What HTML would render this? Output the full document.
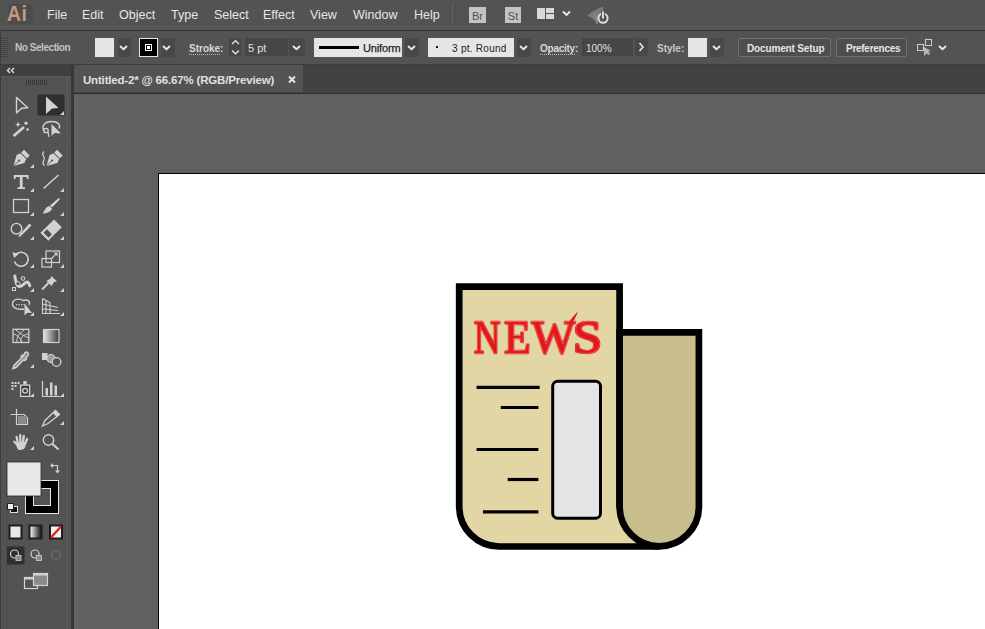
<!DOCTYPE html>
<html><head><meta charset="utf-8">
<style>
*{margin:0;padding:0;box-sizing:border-box}
html,body{width:985px;height:629px;overflow:hidden;background:#535353;font-family:"Liberation Sans",sans-serif;position:relative}
.a{position:absolute}
#menubar{left:0;top:0;width:985px;height:30px;background:#535353}
#menuline{left:0;top:30px;width:985px;height:1px;background:#383838}
#ctrl{left:0;top:31px;width:985px;height:33px;background:#535353}
#ctrlline{left:0;top:64px;width:985px;height:1px;background:#3c3c3c}
.mi{position:absolute;top:8px;font-size:12.5px;color:#e6e6e6;line-height:14px;white-space:nowrap}
.ct{position:absolute;font-size:10px;color:#d8d8d8;line-height:12px;white-space:nowrap}
#tabbar{left:74px;top:65px;width:911px;height:29px;background:#424242}
#tab{left:74px;top:65px;width:229px;height:27px;background:#535353}
#canvas{left:74px;top:94px;width:911px;height:535px;background:#606060}
#artboard{left:158px;top:173px;width:827px;height:456px;background:#fff;border-left:1px solid #000;border-top:1px solid #000}
#tools{left:0;top:65px;width:72px;height:564px;background:#535353}
#toolhdr{left:0;top:65px;width:72px;height:12px;background:#404040}
#toolsep{left:71px;top:65px;width:3px;height:564px;background:#383838}
.btn{background:#484848}
</style></head><body>
<div id="menubar" class="a"></div>
<div id="menuline" class="a"></div>
<div class="a" style="left:0;top:26px;width:985px;height:1px;background:#5a5a5a"></div>
<div class="a" style="left:0;top:28px;width:985px;height:1px;background:#585858"></div>
<div id="ctrl" class="a"></div>
<div id="ctrlline" class="a"></div>
<div id="canvas" class="a"></div>
<div id="artboard" class="a"></div>
<div class="a" style="left:74px;top:94px;width:4px;height:535px;background:#646464"></div>
<div id="tabbar" class="a"></div>
<div id="tab" class="a"></div>
<div id="tools" class="a"></div>
<div id="toolhdr" class="a"></div>
<div id="toolsep" class="a"></div>
<div class="a" style="left:74px;top:93px;width:911px;height:1px;background:#2e2e2e"></div>

<!-- menu -->
<div class="a" style="left:8px;top:4px;width:25px;height:20px;background:#4c4c4c"></div><div class="a" style="left:7px;top:2px;font-size:22px;line-height:24px;color:#c49a7e;font-weight:bold;letter-spacing:0.5px;transform:scaleX(0.88);transform-origin:0 0">Ai</div>
<div class="mi" style="left:47px">File</div>
<div class="mi" style="left:82px">Edit</div>
<div class="mi" style="left:119px">Object</div>
<div class="mi" style="left:171px">Type</div>
<div class="mi" style="left:214px">Select</div>
<div class="mi" style="left:263px">Effect</div>
<div class="mi" style="left:310px">View</div>
<div class="mi" style="left:353px">Window</div>
<div class="mi" style="left:414px">Help</div>


<!-- control bar -->
<div class="a" style="left:0;top:31px;width:1px;height:33px;background:#3c3c3c"></div><div class="a" style="left:1px;top:38px;width:7px;height:19px;background:repeating-linear-gradient(#404040 0 1px,#585858 1px 2px)"></div>
<div class="ct" style="left:15px;top:42px;font-weight:bold;color:#c2c2c2;letter-spacing:-0.45px">No Selection</div>
<div class="a" style="left:95px;top:38px;width:19px;height:19px;background:#e6e6e6"></div>
<div class="a btn" style="left:118px;top:38px;width:13px;height:19px"></div>
<svg class="a chev" style="left:119px;top:45px" width="9" height="6"><polyline points="1,1 4.5,4.2 8,1" fill="none" stroke="#ececec" stroke-width="1.8"/></svg>
<div class="a" style="left:139px;top:38px;width:19px;height:19px;background:#000;border:1px solid #e6e6e6"></div>
<div class="a" style="left:145px;top:44px;width:7px;height:7px;border:1px solid #fff"></div>
<div class="a" style="left:147px;top:46px;width:3px;height:3px;background:#fff"></div>
<div class="a btn" style="left:161px;top:38px;width:14px;height:19px"></div>
<svg class="a chev" style="left:162px;top:45px" width="9" height="6"><polyline points="1,1 4.5,4.2 8,1" fill="none" stroke="#ececec" stroke-width="1.8"/></svg>
<div class="ct" style="left:189px;top:43px;font-weight:bold">Stroke:</div>
<div class="a" style="left:189px;top:54px;width:31px;height:1px;background:repeating-linear-gradient(90deg,#bdbdbd 0 1px,transparent 1px 2px)"></div>
<div class="a btn" style="left:229px;top:38px;width:12px;height:18px"></div>
<svg class="a" style="left:230px;top:39px" width="11" height="17"><polyline points="2,5 5.5,1.8 9,5" fill="none" stroke="#e0e0e0" stroke-width="1.4"/><polyline points="2,11.5 5.5,14.7 9,11.5" fill="none" stroke="#e0e0e0" stroke-width="1.4"/></svg>
<div class="a" style="left:245px;top:38px;width:43px;height:18px;background:#464646"></div>
<div class="ct" style="left:248px;top:42px;font-size:11px;color:#e0e0e0">5 pt</div>
<div class="a btn" style="left:289px;top:38px;width:16px;height:18px"></div>
<svg class="a chev" style="left:292px;top:45px" width="9" height="6"><polyline points="1,1 4.5,4.2 8,1" fill="none" stroke="#ececec" stroke-width="1.8"/></svg>
<div class="a" style="left:314px;top:38px;width:88px;height:19px;background:#e6e6e6"></div>
<div class="a" style="left:319px;top:46px;width:40px;height:3px;background:#000"></div>
<div class="ct" style="left:363px;top:42px;font-weight:normal;color:#1e1e1e;font-size:11px;letter-spacing:-0.15px;-webkit-text-stroke:0.25px #1e1e1e">Uniform</div>
<div class="a btn" style="left:405px;top:38px;width:14px;height:19px"></div>
<svg class="a chev" style="left:407px;top:45px" width="9" height="6"><polyline points="1,1 4.5,4.2 8,1" fill="none" stroke="#ececec" stroke-width="1.8"/></svg>
<div class="a" style="left:428px;top:38px;width:86px;height:19px;background:#e6e6e6"></div>
<div class="a" style="left:436px;top:46px;width:2px;height:2px;background:#111"></div>
<div class="ct" style="left:452px;top:43px;color:#222;letter-spacing:0.27px">3 pt. Round</div>
<div class="a btn" style="left:517px;top:38px;width:14px;height:19px"></div>
<svg class="a chev" style="left:519px;top:45px" width="9" height="6"><polyline points="1,1 4.5,4.2 8,1" fill="none" stroke="#ececec" stroke-width="1.8"/></svg>
<div class="ct" style="left:540px;top:43px;font-weight:bold;letter-spacing:-0.25px">Opacity:</div>
<div class="a" style="left:540px;top:54px;width:36px;height:1px;background:repeating-linear-gradient(90deg,#bdbdbd 0 1px,transparent 1px 2px)"></div>
<div class="a" style="left:582px;top:38px;width:51px;height:18px;background:#464646"></div>
<div class="ct" style="left:586px;top:43px;color:#e0e0e0">100%</div>
<div class="a btn" style="left:635px;top:38px;width:13px;height:18px"></div>
<svg class="a" style="left:638px;top:42px" width="7" height="10"><polyline points="1.5,1 5,5 1.5,9" fill="none" stroke="#e8e8e8" stroke-width="1.6"/></svg>
<div class="ct" style="left:657px;top:43px;font-weight:bold;color:#c8c8c8">Style:</div>
<div class="a" style="left:688px;top:38px;width:19px;height:19px;background:#e6e6e6"></div>
<div class="a btn" style="left:710px;top:38px;width:14px;height:19px"></div>
<svg class="a chev" style="left:712px;top:45px" width="9" height="6"><polyline points="1,1 4.5,4.2 8,1" fill="none" stroke="#ececec" stroke-width="1.8"/></svg>
<div class="a" style="left:738px;top:38px;width:93px;height:19px;border:1px solid #707070;border-radius:2px;background:#4e4e4e"></div>
<div class="ct" style="left:747px;top:43px;font-weight:bold;color:#e6e6e6;letter-spacing:-0.15px">Document Setup</div>
<div class="a" style="left:836px;top:38px;width:71px;height:19px;border:1px solid #707070;border-radius:2px;background:#4e4e4e"></div>
<div class="ct" style="left:846px;top:43px;font-weight:bold;color:#e6e6e6;letter-spacing:-0.27px">Preferences</div>
<svg class="a" style="left:915px;top:38px" width="22" height="19"><rect x="2.5" y="6.5" width="6" height="6" fill="none" stroke="#cfcfcf"/><rect x="10.5" y="1.5" width="6" height="6" fill="none" stroke="#cfcfcf"/><path d="M9,9 L9,18 L11.5,15.5 L14,17 L15,15.5 L13,13.5 L16,13 Z" fill="#b8b8b8"/></svg>
<svg class="a chev" style="left:938px;top:45px" width="9" height="6"><polyline points="1,1 4.5,4.2 8,1" fill="none" stroke="#ececec" stroke-width="1.8"/></svg>


<!-- tools -->
<svg class="a" style="left:0;top:0" width="74" height="629" viewBox="0 0 74 629">
  <rect x="0" y="65" width="1" height="564" fill="#3e3e3e"/><rect x="6" y="77" width="1" height="552" fill="#4c4c4c"/><rect x="67" y="77" width="1" height="552" fill="#5a5a5a"/>
  <polyline points="10,68 7.5,70.5 10,73" fill="none" stroke="#d6d6d6" stroke-width="1.5"/><polyline points="14,68 11.5,70.5 14,73" fill="none" stroke="#d6d6d6" stroke-width="1.5"/><rect x="1" y="76" width="70" height="1" fill="#5a5a5a"/>
  <g fill="#3a3a3a"><rect x="26" y="80" width="1" height="5"/><rect x="28" y="80" width="1" height="5"/><rect x="30" y="80" width="1" height="5"/><rect x="32" y="80" width="1" height="5"/><rect x="34" y="80" width="1" height="5"/><rect x="36" y="80" width="1" height="5"/><rect x="38" y="80" width="1" height="5"/><rect x="40" y="80" width="1" height="5"/><rect x="42" y="80" width="1" height="5"/><rect x="44" y="80" width="1" height="5"/><rect x="46" y="80" width="1" height="5"/></g>
  <!-- selection -->
  <rect x="37.5" y="94.5" width="27" height="21" rx="1.5" fill="#2f2f2f"/>
  <polygon points="46,96.5 58.5,108 52,108.5 46,114" fill="#d2d2d2"/>
  <polygon points="64,111 64,115 60,115" fill="#d2d2d2"/>
  <polygon points="16.5,97.5 27.8,107.7 21.5,108.2 16.5,113" fill="none" stroke="#d2d2d2" stroke-width="1.4" stroke-linejoin="round"/>
  <!-- magic wand -->
  <line x1="13.5" y1="136" x2="24" y2="127" stroke="#d2d2d2" stroke-width="2.6"/>
  <path d="M18,121.5 L18.8,123.8 L21,124.5 L18.8,125.3 L18,127.5 L17.2,125.3 L15,124.5 L17.2,123.8Z" fill="#d2d2d2"/>
  <circle cx="26" cy="123.2" r="1.6" fill="#d2d2d2"/><circle cx="27.5" cy="129.5" r="1.3" fill="#d2d2d2"/>
  <!-- lasso -->
  <path d="M44,131 C41,126 45,121.5 51.5,121.5 C58,121.5 61,125 59,128.5" fill="none" stroke="#d2d2d2" stroke-width="1.4"/>
  <circle cx="46" cy="130.5" r="2.2" fill="none" stroke="#d2d2d2" stroke-width="1.3"/>
  <polygon points="51.5,124 51.5,136 54.5,133 61,133.5" fill="#d2d2d2"/>
  <line x1="48" y1="132" x2="49" y2="137" stroke="#d2d2d2" stroke-width="1.2"/>
  <rect x="5" y="143" width="64" height="1" fill="#505050"/>
  <!-- pen -->
  <g transform="translate(20.5,159) rotate(45)">
    <path d="M-4,-9 L4,-9 L4,-4 L5.5,0 L0,10 L-5.5,0 L-4,-4 Z" fill="#d2d2d2"/>
    <circle cx="0" cy="2" r="1.1" fill="#535353"/><line x1="0" y1="3" x2="0" y2="10" stroke="#535353" stroke-width="0.8"/>
    <rect x="-4.5" y="-5" width="9" height="1" fill="#535353"/>
  </g>
  <polygon points="34,164 34,168 30,168" fill="#d2d2d2"/>
  <!-- curvature pen -->
  <path d="M44,151.5 C40,154 46,157 44,160 C42.5,162.5 42.5,164 44.5,165.5" fill="none" stroke="#d2d2d2" stroke-width="1.3"/>
  <g transform="translate(53.5,159) rotate(45)">
    <path d="M-4,-9 L4,-9 L4,-4 L5.5,0 L0,10 L-5.5,0 L-4,-4 Z" fill="#d2d2d2"/>
    <circle cx="0" cy="2" r="1.1" fill="#535353"/><line x1="0" y1="3" x2="0" y2="10" stroke="#535353" stroke-width="0.8"/>
    <rect x="-4.5" y="-5" width="9" height="1" fill="#535353"/>
  </g>
  <!-- type -->
  <path d="M13.8,175 H28.6 V179 H27 L26.5,177 H22.6 V187.2 H25 V189 H17.4 V187.2 H19.8 V177 H15.9 L15.4,179 H13.8 Z" fill="#d2d2d2"/>
  <polygon points="34,188 34,192 30,192" fill="#d2d2d2"/>
  <!-- line -->
  <line x1="43.5" y1="188.5" x2="58.5" y2="175" stroke="#d2d2d2" stroke-width="1.5"/>
  <polygon points="64,188 64,192 60,192" fill="#d2d2d2"/>
  <!-- rect -->
  <rect x="13.5" y="199.5" width="15" height="13" fill="none" stroke="#d2d2d2" stroke-width="1.3"/>
  <polygon points="34,212 34,216 30,216" fill="#d2d2d2"/>
  <!-- brush -->
  <path d="M58.8,198 L60,199.2 L52,207.5 L50,205.5 Z" fill="#d2d2d2"/>
  <path d="M49.5,206 L52,208.5 C51,212 47,213.5 42.5,213.5 C44.5,211.5 45,207 49.5,206Z" fill="#d2d2d2"/>
  <polygon points="64,212 64,216 60,216" fill="#d2d2d2"/>
  <!-- shaper -->
  <circle cx="16.5" cy="228.7" r="5.3" fill="none" stroke="#d2d2d2" stroke-width="1.4"/>
  <path d="M29.5,223.5 L31.5,225.5 L21,236 L18.3,237.6 L19.5,234.5 Z" fill="#d2d2d2"/>
  <polygon points="34,236 34,240 30,240" fill="#d2d2d2"/>
  <!-- eraser -->
  <g transform="translate(51.2,230) rotate(-45)">
    <rect x="-9.5" y="-5.5" width="19" height="11" fill="#d2d2d2"/>
    <rect x="-7.5" y="-3.5" width="5" height="7" fill="#535353"/>
    <rect x="-9.5" y="-5.5" width="2" height="11" fill="#d2d2d2"/>
  </g>
  <polygon points="64,236 64,240 60,240" fill="#d2d2d2"/>
  <rect x="5" y="243" width="64" height="1" fill="#505050"/>
  <!-- rotate -->
  <path d="M15.5,255 A7,7 0 1 1 14.5,261.5" fill="none" stroke="#d2d2d2" stroke-width="1.6"/>
  <polygon points="12.5,252 18.5,254 14,258" fill="#d2d2d2"/>
  <polygon points="34,264 34,268 30,268" fill="#d2d2d2"/>
  <!-- scale -->
  <rect x="46" y="251" width="13.5" height="11.5" fill="none" stroke="#d2d2d2" stroke-width="1.2"/>
  <rect x="42" y="258.5" width="9.5" height="8.5" fill="none" stroke="#d2d2d2" stroke-width="1.2"/>
  <line x1="51" y1="259" x2="56.5" y2="253.5" stroke="#d2d2d2" stroke-width="1.1"/>
  <polygon points="57.5,252.5 57.5,256.5 53.5,252.5" fill="#d2d2d2"/>
  <polygon points="64,264 64,268 60,268" fill="#d2d2d2"/>
  <!-- width/warp -->
  <path d="M14.8,276 C15.5,280 16,284 18,286 C20,287.8 22.5,285.5 24.5,283.5 C26.5,281.5 28.2,280.5 29.8,285.8" fill="none" stroke="#d2d2d2" stroke-width="3" stroke-linecap="round"/>
  <circle cx="18" cy="283.6" r="2.1" fill="#535353" stroke="#d2d2d2" stroke-width="1"/>
  <circle cx="23" cy="278.5" r="1.8" fill="#535353" stroke="#d2d2d2" stroke-width="1.1"/>
  <rect x="12.5" y="287.5" width="3" height="3" fill="none" stroke="#d2d2d2" stroke-width="1"/>
  <polygon points="34,288 34,292 30,292" fill="#d2d2d2"/>
  <!-- puppet pin -->
  <path d="M51.5,276 L57,281.5 L54,282 L51.5,286 L46.5,281 L50.5,278.5 Z" fill="#d2d2d2"/>
  <line x1="42" y1="289.5" x2="48.5" y2="283" stroke="#d2d2d2" stroke-width="2"/>
  <polygon points="64,288 64,292 60,292" fill="#d2d2d2"/>
  <!-- shape builder -->
  <path d="M24,309 C18,310 12,308 12.5,303.5 C13,299 19,298 23,300.5 C27,299 31,301 29,305" fill="none" stroke="#d2d2d2" stroke-width="1.4"/>
  <g fill="#d2d2d2"><rect x="16" y="304" width="1.3" height="1.3"/><rect x="18.5" y="304" width="1.3" height="1.3"/><rect x="21" y="304" width="1.3" height="1.3"/><rect x="23.5" y="304" width="1.3" height="1.3"/></g>
  <polygon points="24.5,303.5 24.5,315.5 27.3,312.7 32,313" fill="#d2d2d2"/>
  <polygon points="34,312 34,316 30,316" fill="#d2d2d2"/>
  <!-- perspective -->
  <path d="M42.5,298.5 V313.5 H60 M42.5,298.5 L50,302.5 V313.5 M46,300.3 V313.5 M42.5,304 L58,307.5 M42.5,309 L58,310.5" fill="none" stroke="#d2d2d2" stroke-width="1.1"/>
  <polygon points="64,312 64,316 60,316" fill="#d2d2d2"/>
  <rect x="5" y="320" width="64" height="1" fill="#505050"/>
  <!-- mesh -->
  <rect x="13" y="329.3" width="15.8" height="13.2" fill="none" stroke="#d2d2d2" stroke-width="1.3"/>
  <path d="M17,342 C16,337 20,333 24,330 M21,342 C20,338 23,335 28,334 M13.5,334 C18,335 20,338 22,342 M16,330 C19,333 24,336 28.5,338" fill="none" stroke="#d2d2d2" stroke-width="1"/>
  <!-- gradient -->
  <defs><linearGradient id="gr" x1="0" x2="1"><stop offset="0" stop-color="#e8e8e8"/><stop offset="1" stop-color="#3a3a3a"/></linearGradient>
  <linearGradient id="gr2" x1="0" x2="1"><stop offset="0" stop-color="#f0f0f0"/><stop offset="1" stop-color="#222"/></linearGradient></defs>
  <rect x="43.5" y="329.5" width="15.5" height="13" fill="url(#gr)" stroke="#d2d2d2" stroke-width="1.2"/>
  <!-- eyedropper -->
  <path d="M25,352.5 C27,351 29.5,353.5 28,355.5 L25.5,358 L26.5,359 L25,360.5 L24,359.5 L16,367.5 L13,368.5 L14,365.5 L22,357.5 L21,356.5 L22.5,355 L23.5,356 Z" fill="#8a8a8a" stroke="#d2d2d2" stroke-width="1.5"/>
  <polygon points="34,364 34,368 30,368" fill="#d2d2d2"/>
  <!-- blend -->
  <rect x="42" y="353" width="5.5" height="7" fill="#d2d2d2"/>
  <circle cx="51" cy="358.5" r="4" fill="#9a9a9a" stroke="#d2d2d2" stroke-width="1.1"/>
  <circle cx="56.5" cy="362" r="4.3" fill="#535353" stroke="#d2d2d2" stroke-width="1.3"/>
  <!-- symbol sprayer -->
  <g fill="#d2d2d2"><rect x="11.5" y="382" width="2" height="2"/><rect x="14.5" y="382" width="2" height="2"/><rect x="17.5" y="382" width="2" height="2"/><rect x="11.5" y="385" width="2" height="2"/><rect x="14.5" y="385" width="2" height="2"/><rect x="11.5" y="388" width="2" height="2"/></g>
  <rect x="23.3" y="381" width="3.4" height="3.5" fill="#d2d2d2"/>
  <rect x="20.6" y="385.1" width="9" height="11.3" fill="#3a3a3a" stroke="#d2d2d2" stroke-width="1.3"/>
  <circle cx="25.1" cy="390.8" r="2.4" fill="none" stroke="#d2d2d2" stroke-width="1.3"/>
  <polygon points="34,393 34,397 30,397" fill="#d2d2d2"/>
  <!-- graph -->
  <path d="M42.5,381 V396.5 H60" fill="none" stroke="#d2d2d2" stroke-width="1.2"/>
  <rect x="45.5" y="388" width="2.5" height="7.5" fill="#d2d2d2"/><rect x="50" y="382.5" width="2.5" height="13" fill="#d2d2d2"/><rect x="54.5" y="385.5" width="2.5" height="10" fill="#d2d2d2"/>
  <polygon points="64,393 64,397 60,397" fill="#d2d2d2"/>
  <rect x="5" y="402" width="64" height="1" fill="#505050"/>
  <!-- artboard -->
  <path d="M10.5,414.5 H16.5 M16.5,409 V424.5 H27.5 V418 L24,414.5 H16.5" fill="none" stroke="#d2d2d2" stroke-width="1.2"/>
  <rect x="18" y="416" width="8.5" height="8" fill="#8a8a8a"/>
  <!-- slice/pencil-ish -->
  <path d="M55.5,410.5 L59.5,414.5 L48,423.5 L42.5,426 L45,420.5 Z" fill="none" stroke="#d2d2d2" stroke-width="1.3"/>
  <path d="M55.5,410.5 L59.5,414.5 L56.5,417 L53,413 Z" fill="#d2d2d2"/>
  <polygon points="64,421 64,425 60,425" fill="#d2d2d2"/>
  <!-- hand -->
  <g stroke="#d2d2d2" stroke-width="2.3" stroke-linecap="round" fill="none">
    <line x1="17.8" y1="443" x2="16.6" y2="437"/>
    <line x1="20.4" y1="442" x2="20.2" y2="435.2"/>
    <line x1="23" y1="442" x2="23.8" y2="436"/>
    <line x1="25.3" y1="443.5" x2="27" y2="439"/>
    <line x1="18.5" y1="446" x2="14.3" y2="441.8"/>
  </g>
  <path d="M16.5,442 H26 L25.5,446.5 C24.5,449 22.5,450 20,450 C17.5,450 16,447.5 16.5,442Z" fill="#d2d2d2"/>
  <polygon points="34,446 34,450 30,450" fill="#d2d2d2"/>
  <!-- zoom -->
  <circle cx="48.5" cy="440" r="5.2" fill="none" stroke="#d2d2d2" stroke-width="1.4"/>
  <line x1="52.5" y1="444" x2="58.5" y2="449.5" stroke="#d2d2d2" stroke-width="2.2"/>
  <!-- fill / stroke -->
  <rect x="25.5" y="480.5" width="33" height="33" fill="#000" stroke="#e6e6e6" stroke-width="1"/>
  <rect x="33.5" y="488.5" width="17" height="17" fill="#535353" stroke="#e6e6e6" stroke-width="1"/>
  <rect x="7" y="462" width="34" height="34" fill="#e8e8e8" stroke="#2a2a2a" stroke-width="0.8"/>
  <path d="M52,465.5 H57.5 V471" fill="none" stroke="#d2d2d2" stroke-width="1.2"/>
  <polygon points="50,465.5 53,463 53,468" fill="#d2d2d2"/><polygon points="57.5,473.5 55,470.5 60,470.5" fill="#d2d2d2"/>
  <rect x="10.5" y="506.5" width="7" height="6" fill="#111" stroke="#ddd" stroke-width="1"/>
  <rect x="7.5" y="503.5" width="6" height="6" fill="#eee" stroke="#222" stroke-width="1"/>
  <!-- color/gradient/none -->
  <rect x="8.5" y="524.5" width="14" height="15" fill="#1e1e1e"/>
  <rect x="10.5" y="526.5" width="10" height="11" fill="#e8e8e8"/>
  <rect x="28.5" y="524.5" width="14" height="15" fill="#1e1e1e"/>
  <rect x="30.5" y="526.5" width="10" height="11" fill="url(#gr2)"/>
  <rect x="49" y="524.5" width="14" height="15" fill="#1e1e1e"/>
  <rect x="51" y="526.5" width="10" height="11" fill="#f4f4f4"/>
  <line x1="51" y1="537.5" x2="61" y2="526.5" stroke="#e02020" stroke-width="2.4"/>
  <!-- draw modes -->
  <rect x="7" y="546.5" width="17.5" height="18" fill="#2f2f2f"/>
  <circle cx="14.5" cy="554" r="4" fill="none" stroke="#d2d2d2" stroke-width="1.2"/><rect x="16" y="555.5" width="5" height="5" fill="#888" stroke="#d2d2d2" stroke-width="0.8"/>
  <circle cx="35" cy="554" r="4" fill="none" stroke="#d2d2d2" stroke-width="1.2"/><rect x="36.5" y="555.5" width="5" height="5" fill="#888" stroke="#d2d2d2" stroke-width="0.8"/>
  <circle cx="56" cy="555" r="4.2" fill="none" stroke="#6a6a6a" stroke-width="1.5"/>
  <!-- screen mode -->
  <rect x="24.5" y="577.5" width="13" height="11" fill="#535353" stroke="#d2d2d2" stroke-width="1.2"/>
  <rect x="24.5" y="577.5" width="13" height="2" fill="#d2d2d2"/>
  <rect x="33.5" y="573.5" width="14" height="12" fill="#8a8a8a" stroke="#d2d2d2" stroke-width="1.2"/>
  <rect x="33.5" y="573.5" width="14" height="2" fill="#d2d2d2"/>
</svg>


<!-- menubar icons -->
<div class="a" style="left:450px;top:4px;width:5px;height:20px;background:#5a5a5a;border-left:1px solid #4a4a4a;border-right:1px solid #4a4a4a"></div>
<div class="a" style="left:469px;top:7px;width:17px;height:16px;background:#c4c4c4"></div>
<div class="a" style="left:469px;top:8px;width:17px;height:16px;font-size:11px;font-weight:normal;color:#505050;text-align:center;line-height:16px;letter-spacing:0px">Br</div>
<div class="a" style="left:505px;top:7px;width:16px;height:16px;background:#c4c4c4"></div>
<div class="a" style="left:505px;top:8px;width:16px;height:16px;font-size:11px;font-weight:normal;color:#505050;text-align:center;line-height:16px;letter-spacing:0px">St</div>
<svg class="a" style="left:536px;top:7px" width="20" height="13"><rect x="1" y="1" width="8" height="11" fill="#d8d8d8"/><rect x="10" y="1" width="8" height="5" fill="#d8d8d8"/><rect x="10" y="7" width="8" height="5" fill="#d8d8d8"/></svg>
<svg class="a" style="left:562px;top:10px" width="10" height="7"><polyline points="1,1.5 4.5,5 8,1.5" fill="none" stroke="#ececec" stroke-width="1.8"/></svg>
<svg class="a" style="left:585px;top:4px" width="26" height="22"><path d="M2,12 C6,8 11,5 18,2.5 C19,5 18,8 16,10 C15,14 13,18 12,20 C10,16 7,13 2,12Z" fill="#7a7a7a"/><path d="M9,9 C11,12 12,16 12,20" stroke="#909090" stroke-width="1" fill="none"/><circle cx="18" cy="14.2" r="4.6" fill="none" stroke="#dedede" stroke-width="2"/><rect x="17" y="7.5" width="2" height="7" fill="#dedede"/><rect x="16" y="6.5" width="1" height="8" fill="#535353"/><rect x="19" y="6.5" width="1" height="8" fill="#535353"/></svg>

<!-- tab -->
<div class="a" style="left:83px;top:74px;font-size:11.5px;font-weight:bold;color:#e0e0e0;white-space:nowrap;letter-spacing:-0.18px">Untitled-2* @ 66.67% (RGB/Preview)</div>

<svg class="a" style="left:288px;top:75px" width="8" height="9"><path d="M1,1.5 L7,7.5 M7,1.5 L1,7.5" stroke="#e6e6e6" stroke-width="1.9"/></svg>
<!-- illustration -->
<svg class="a" style="left:0;top:0" width="985" height="629" viewBox="0 0 985 629">
  <path d="M458.8,286.6 H619.6 V506.7 L659.2,546.5 H499 A40,40 0 0 1 459.2,506.5 Z" fill="#e2d6a4"/>
  <path d="M659.2,546.5 H499 A40,40 0 0 1 459.2,506.5 V286.6 H619.6 V506.7" fill="none" stroke="#000" stroke-width="6.7"/>
  <path d="M619.6,332.3 H698.9 V506.7 A39.65,39.65 0 0 1 619.6,506.7 Z" fill="#c8bd8c" stroke="#000" stroke-width="6.7"/>
  <rect x="552.7" y="381.3" width="47.8" height="136.9" rx="5" fill="#e5e5e5" stroke="#000" stroke-width="3"/>
  <g stroke="#000" stroke-width="3.2">
    <line x1="476.6" y1="387.4" x2="539.7" y2="387.4"/>
    <line x1="500.8" y1="407.5" x2="538.4" y2="407.5"/>
    <line x1="476.6" y1="449.5" x2="538.4" y2="449.5"/>
    <line x1="507.7" y1="479.5" x2="538.4" y2="479.5"/>
    <line x1="483" y1="511.8" x2="538.4" y2="511.8"/>
  </g>
  <g font-family="Liberation Serif" font-weight="normal" font-size="50">
    <g fill="#e3161b" stroke="#e3161b" stroke-width="2.6" stroke-linejoin="round"><text transform="translate(474,353) scale(0.73,0.927)">N</text><text transform="translate(504.2,353) scale(0.863,0.927)">E</text><text transform="translate(531.8,353) scale(0.917,0.927)">W</text><text transform="translate(572.7,353) scale(1.06,0.927)">S</text></g>
    <g fill="none" stroke="#f4c4a8" stroke-width="0.9"><text transform="translate(474,353) scale(0.73,0.927)">N</text><text transform="translate(504.2,353) scale(0.863,0.927)">E</text><text transform="translate(531.8,353) scale(0.917,0.927)">W</text><text transform="translate(572.7,353) scale(1.06,0.927)">S</text></g>
    <g fill="#e3161b" stroke="#e3161b" stroke-width="0.6"><text transform="translate(474,353) scale(0.73,0.927)">N</text><text transform="translate(504.2,353) scale(0.863,0.927)">E</text><text transform="translate(531.8,353) scale(0.917,0.927)">W</text><text transform="translate(572.7,353) scale(1.06,0.927)">S</text></g>
  </g>
  <path d="M569,322 C572,318 575,314 578,311.5 C577,315 575,318 573,322 Z" fill="#e01a1a"/>
</svg>
</body></html>
